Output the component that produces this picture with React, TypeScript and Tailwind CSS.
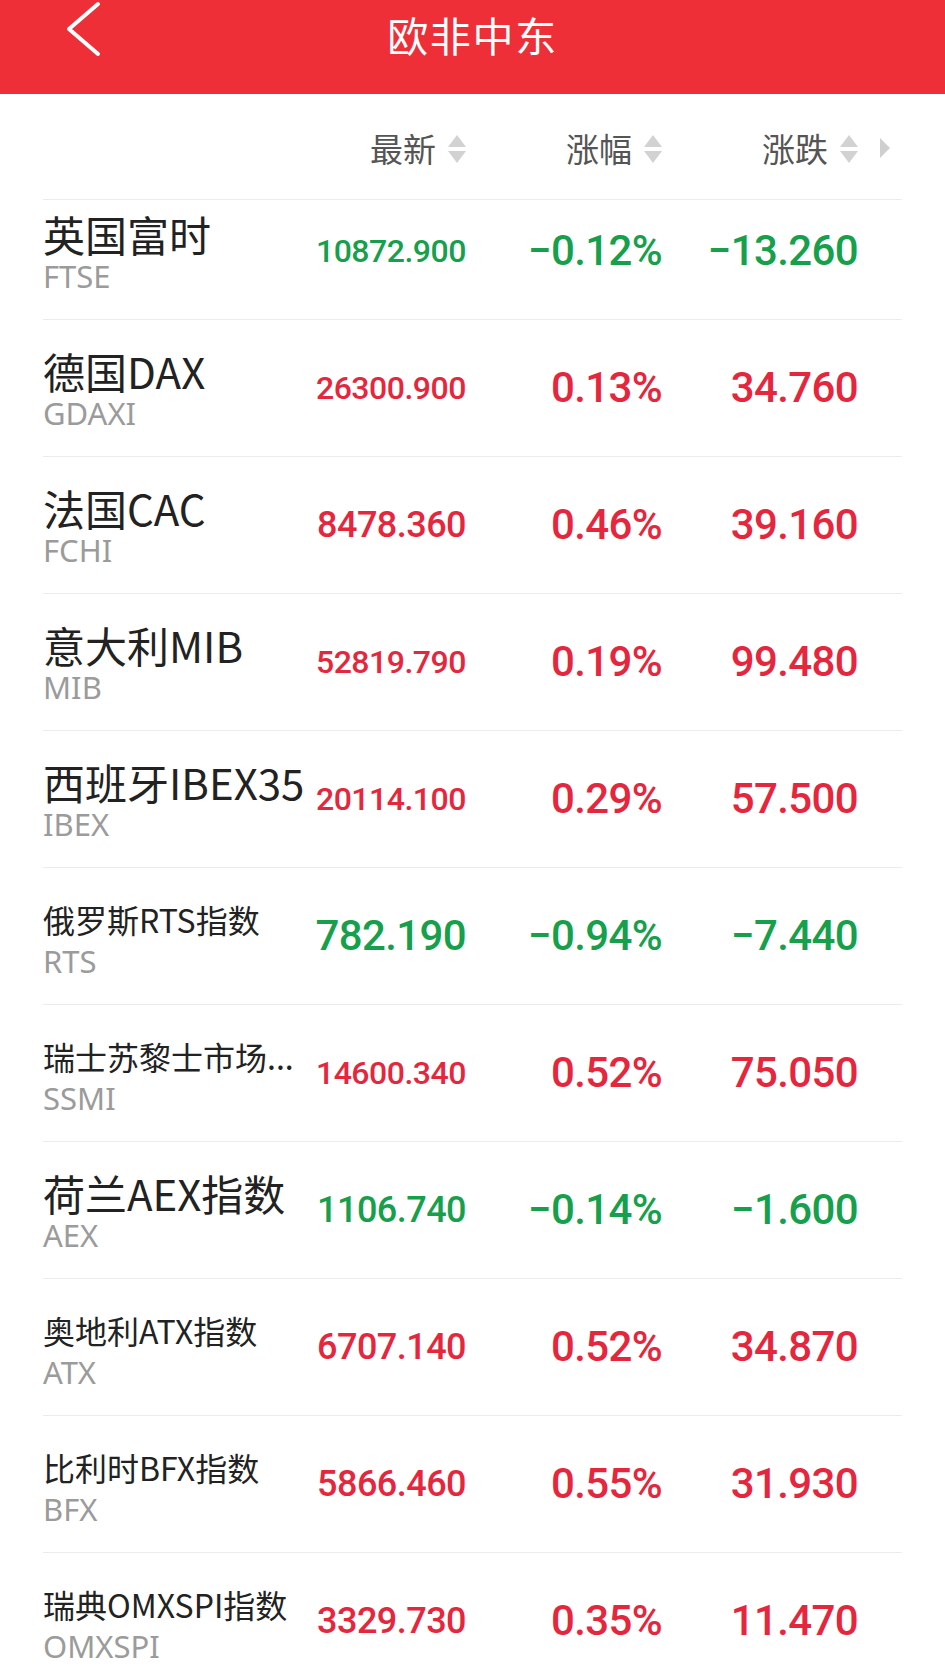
type Row = {
  name: string;
  code: string;
  big: boolean;
  last: string;
  lastSize: string;
  pct: string;
  chg: string;
  up: boolean;
};

const rows: Row[] = [
  { name: "英国富时", code: "FTSE", big: true, last: "10872.900", lastSize: "text-[32px]", pct: "−0.12%", chg: "−13.260", up: false },
  { name: "德国DAX", code: "GDAXI", big: true, last: "26300.900", lastSize: "text-[32px]", pct: "0.13%", chg: "34.760", up: true },
  { name: "法国CAC", code: "FCHI", big: true, last: "8478.360", lastSize: "text-[36px]", pct: "0.46%", chg: "39.160", up: true },
  { name: "意大利MIB", code: "MIB", big: true, last: "52819.790", lastSize: "text-[32px]", pct: "0.19%", chg: "99.480", up: true },
  { name: "西班牙IBEX35", code: "IBEX", big: true, last: "20114.100", lastSize: "text-[32px]", pct: "0.29%", chg: "57.500", up: true },
  { name: "俄罗斯RTS指数", code: "RTS", big: false, last: "782.190", lastSize: "text-[42px]", pct: "−0.94%", chg: "−7.440", up: false },
  { name: "瑞士苏黎士市场...", code: "SSMI", big: false, last: "14600.340", lastSize: "text-[32px]", pct: "0.52%", chg: "75.050", up: true },
  { name: "荷兰AEX指数", code: "AEX", big: true, last: "1106.740", lastSize: "text-[36px]", pct: "−0.14%", chg: "−1.600", up: false },
  { name: "奥地利ATX指数", code: "ATX", big: false, last: "6707.140", lastSize: "text-[36px]", pct: "0.52%", chg: "34.870", up: true },
  { name: "比利时BFX指数", code: "BFX", big: false, last: "5866.460", lastSize: "text-[36px]", pct: "0.55%", chg: "31.930", up: true },
  { name: "瑞典OMXSPI指数", code: "OMXSPI", big: false, last: "3329.730", lastSize: "text-[36px]", pct: "0.35%", chg: "11.470", up: true },
];

function SortIcon() {
  return (
    <svg width="18" height="28" viewBox="0 0 18 28" className="ml-[12px]">
      <polygon points="9,0 18,12 0,12" fill="#d2d2d2" />
      <polygon points="0,16 18,16 9,28" fill="#d2d2d2" />
    </svg>
  );
}

function HeadLabel({ label }: { label: string }) {
  return (
    <div className="flex items-center justify-end">
      <span className="text-[33px] leading-none text-[#555]">{label}</span>
      <SortIcon />
    </div>
  );
}

export default function App() {
  return (
    <div className="w-[945px] h-[1678px] overflow-hidden bg-white font-['Noto_Sans_CJK_SC',sans-serif]">
      {/* Title bar */}
      <header className="relative h-[94px] bg-[#ee2f38]">
        <div className="h-[68px] flex items-center justify-center">
          <span className="text-[41px] leading-none text-white tracking-[0.04em]">欧非中东</span>
        </div>
        <svg width="40" height="60" viewBox="0 0 40 60" className="absolute left-[62px] top-0">
          <polyline points="36,4 7,29 36,54" fill="none" stroke="white" strokeWidth="4" strokeLinecap="round" strokeLinejoin="round" />
        </svg>
      </header>

      {/* Column heads */}
      <div className="mx-[43px] h-[106px] border-b border-[#ececec] pt-[4px] grid grid-cols-[1fr_150px_196px_196px] pr-[44px] items-center relative">
        <div />
        <HeadLabel label="最新" />
        <HeadLabel label="涨幅" />
        <HeadLabel label="涨跌" />
        <svg width="10" height="20" viewBox="0 0 10 20" className="absolute right-[12px] top-[44px]">
          <polygon points="0,0 10,10 0,20" fill="#cfcfcf" />
        </svg>
      </div>

      {/* Quote list */}
      <div className="overflow-hidden">
        <div className="-mt-[17px]">
          {rows.map((r) => {
            const color = r.up ? "text-[#e5263d]" : "text-[#16a04c]";
            return (
              <div
                key={r.code}
                className="mx-[43px] h-[137px] border-b border-[#ececec] grid grid-cols-[1fr_150px_196px_196px] pr-[44px] items-center"
              >
                <div className="flex flex-col pt-[4px] whitespace-nowrap">
                  <span className={(r.big ? "text-[42px]" : "text-[32px]") + " leading-[46px] text-[#222]"}>{r.name}</span>
                  <span className="text-[31px] leading-[38px] text-[#9b9b9b] font-['Noto_Sans',sans-serif]">{r.code}</span>
                </div>
                <div className={`flex justify-end font-['Roboto',sans-serif] font-medium leading-none tracking-[-0.015em] ${r.lastSize} ${color}`}>
                  {r.last}
                </div>
                <div className={`flex justify-end font-['Roboto',sans-serif] font-medium leading-none tracking-[-0.015em] text-[42px] ${color}`}>
                  {r.pct}
                </div>
                <div className={`flex justify-end font-['Roboto',sans-serif] font-medium leading-none tracking-[-0.015em] text-[42px] ${color}`}>
                  {r.chg}
                </div>
              </div>
            );
          })}
        </div>
      </div>
    </div>
  );
}
